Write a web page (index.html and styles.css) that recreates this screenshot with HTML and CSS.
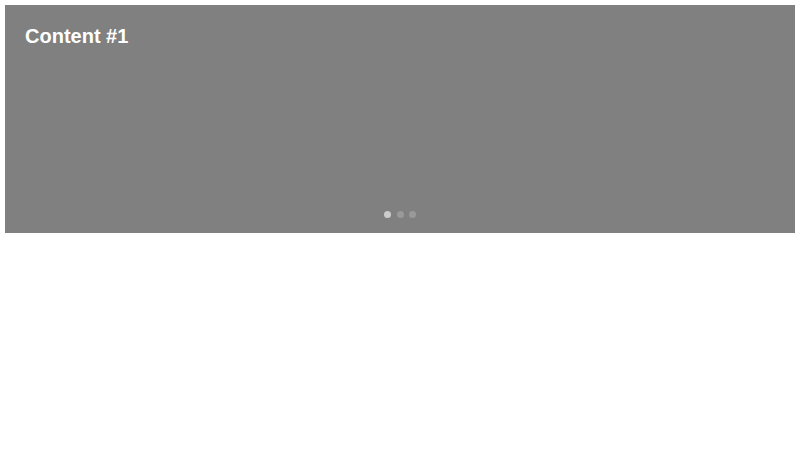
FILE: index.html
```html
<!DOCTYPE html>
<html>
<head>
<meta charset="utf-8">
<link rel="stylesheet" href="styles.css">
</head>
<body>
<div class="carousel">
  <div class="slide">
    <h2 class="title">Content #1</h2>
  </div>
  <div class="dots">
    <span class="dot active"></span>
    <span class="dot"></span>
    <span class="dot"></span>
  </div>
</div>
</body>
</html>
```
FILE: styles.css
```css
html, body {
  margin: 0;
  padding: 0;
  background: #fff;
}
body {
  padding: 5px;
  font-family: "Liberation Sans", Arial, sans-serif;
}
.carousel {
  background: #808080;
  height: 228px;
  display: flex;
  flex-direction: column;
  justify-content: space-between;
}
.slide {
  padding: 20px;
}
.title {
  margin: 0;
  color: #fff;
  font-size: 20px;
  font-weight: bold;
  line-height: 23px;
}
.dots {
  display: flex;
  justify-content: center;
  gap: 5.5px;
  padding-bottom: 15.5px;
}
.dot {
  width: 7px;
  height: 7px;
  border-radius: 50%;
  background: #999;
}
.dot.active {
  background: #ccc;
}
```
